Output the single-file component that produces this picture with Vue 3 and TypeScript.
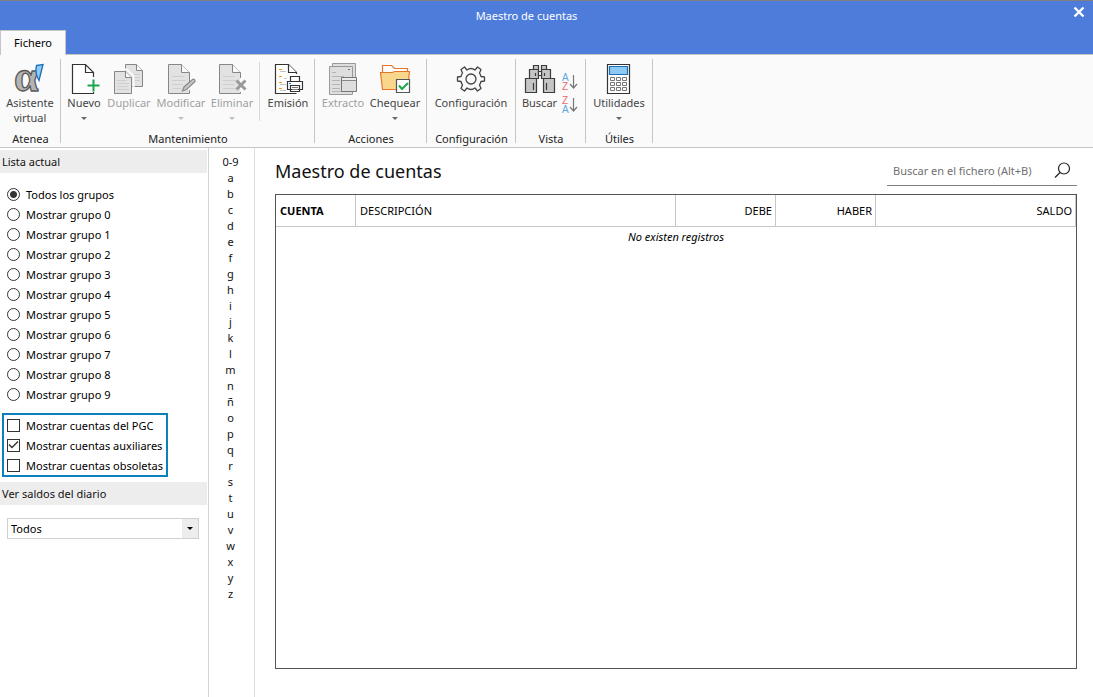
<script setup lang="ts">
import { ref } from 'vue'

const groups = ['Todos los grupos', ...Array.from({ length: 10 }, (_, i) => `Mostrar grupo ${i}`)]
const selectedGroup = ref(groups[0])

const filters = ref([
  { id: 'pgc', label: 'Mostrar cuentas del PGC', on: false },
  { id: 'aux', label: 'Mostrar cuentas auxiliares', on: true },
  { id: 'obs', label: 'Mostrar cuentas obsoletas', on: false },
])

const letters = ['0-9', ...'abcdefghijklmnñopqrstuvwxyz']
const journal = ref('Todos')
const query = ref('')
</script>

<template>
  <div class="window">
    <header class="titlebar">
      <div class="title">Maestro de cuentas</div>
      <button class="close" aria-label="Cerrar">
        <svg width="12" height="12" viewBox="0 0 12 12"><path d="M1.5 1.5l9 9M10.5 1.5l-9 9" stroke="#fff" stroke-width="2.4" /></svg>
      </button>
      <nav class="tabs"><button class="tab">Fichero</button></nav>
    </header>

    <div class="ribbon">
      <section class="group g-atenea">
        <div class="tools">
          <button class="tool">
            <svg class="icon" viewBox="0 0 34 34">
              <text x="1" y="29" class="alpha">α</text>
              <path d="M23.500 3.500L30 2.500L26 18.500Q21.500 11 23.500 3.500z" fill="#8fcaf5" stroke="#1c6fb5" stroke-width="1.300" />
            </svg>
            <span>Asistente<br />virtual</span>
          </button>
        </div>
        <h2>Atenea</h2>
      </section>

      <section class="group g-mant">
        <div class="tools">
          <button class="tool">
            <svg class="icon" viewBox="0 0 34 34" fill="none">
              <path d="M26.500 15V10.500L18.500 2.500H5.500V31.500H26.500V30M18.500 2.500V10.500H26.500" fill="#fff" stroke="#333" stroke-width="1.200" />
              <path d="M24 17h5v12h-5z" fill="#fafafa" />
              <path d="M26.500 17.500v12M20.500 23.500h12" stroke="#17a84b" stroke-width="2" />
            </svg>
            <span>Nuevo</span><i class="caret"></i>
          </button>
          <button class="tool" disabled>
            <svg class="icon" viewBox="0 0 34 34" stroke="#868686" fill="#e2e2e2">
              <path d="M13.500 24.500V2.500H24.500L30.500 8.500V24.500z" />
              <path d="M24.500 2.500V8.500H30.500" fill="#fafafa" />
              <path d="M21 12.500h7M21 15.500h7M21 18.500h7" stroke="#cfcfcf" />
              <path d="M0.500 7.500H15L21.500 14V33.500" fill="none" stroke="#fafafa" stroke-width="2" />
              <path d="M2.500 31.500V9.500H13.500L19.500 15.500V31.500z" />
              <path d="M13.500 9.500V15.500H19.500" fill="#fafafa" />
              <path d="M5 18.500h10M5 21.500h12M5 24.500h11M5 27.500h12" stroke="#cfcfcf" />
            </svg>
            <span>Duplicar</span>
          </button>
          <button class="tool" disabled>
            <svg class="icon" viewBox="0 0 34 34" stroke="#868686" fill="#e2e2e2">
              <path d="M4.500 31.500V2.500H17.500L25.500 10.500V31.500z" />
              <path d="M17.500 2.500V10.500H25.500" fill="#fafafa" />
              <path d="M8 14.500h12M8 18.500h14M8 22.500h11M8 26.500h9" stroke="#cfcfcf" />
              <path d="M23 27L30 20" stroke="#fafafa" stroke-width="5" />
              <path d="M18.500 29L20 25L28.500 17.500Q31 16.500 31 19.500L22.500 27.500z" fill="#c8c8c8" stroke="#8c8c8c" stroke-width="1.300" />
            </svg>
            <span>Modificar</span><i class="caret"></i>
          </button>
          <button class="tool" disabled>
            <svg class="icon" viewBox="0 0 34 34" stroke="#868686" fill="#e2e2e2">
              <path d="M4.500 31.500V2.500H17.500L25.500 10.500V31.500z" />
              <path d="M17.500 2.500V10.500H25.500" fill="#fafafa" />
              <path d="M8 14.500h12M8 18.500h13M8 22.500h11M8 26.500h12" stroke="#cfcfcf" />
              <path d="M25 16h4v14h-4z" fill="#fafafa" stroke="none" />
              <path d="M21.500 18.500l9 9M30.500 18.500l-9 9" stroke="#9a9a9a" stroke-width="3" />
            </svg>
            <span>Eliminar</span><i class="caret"></i>
          </button>
          <div class="rule"></div>
          <button class="tool">
            <svg class="icon" viewBox="0 0 34 34" stroke="#333" fill="#fff" stroke-width="1.200">
              <path d="M25.500 12V10.500L17.500 2.500H4.500V31.500H25.500" />
              <path d="M17.500 2.500V10.500H25.500" />
              <path d="M8 7.500h3M8 14.500h3M8 20.500h3M8 26.500h3" stroke="#f0961e" />
              <path d="M9 9.500h6M13 16.500h3M9 22.500h6M9 28.500h6" stroke="#c4c4c4" />
              <path d="M16 17h17v14H16z" stroke="none" />
              <path d="M19.500 19V14.500H28.500V19M16.500 19.500H31.500V27.500H16.500zM19.500 23.500H28.500V29.500H19.500z" />
              <path d="M21 25.500h6M21 27.500h6" stroke="#777" />
              <path d="M18 21.500h2" stroke="#2f8fd6" />
            </svg>
            <span>Emisión</span>
          </button>
        </div>
        <h2>Mantenimiento</h2>
      </section>

      <section class="group g-acc">
        <div class="tools">
          <button class="tool" disabled>
            <svg class="icon" viewBox="0 0 34 34" stroke="#999" fill="#dedede">
              <path d="M6.500 1.500H29.500V28.500H6.500z" />
              <path d="M3.500 4.500H26.500V32.500H3.500z" />
              <path d="M6 10.500h4M6 14.500h12M6 18.500h8M6 22.500h8M6 26.500h8M6 29.500h12" stroke="#b4b4b4" />
              <path d="M22 7.500h2" stroke="#777" />
              <path d="M15.500 15.500H30.500V29.500H15.500z" stroke="#777" />
              <path d="M15.500 18.500h15" stroke="#888" />
              <path d="M16 17h14" stroke="#fafafa" />
            </svg>
            <span>Extracto</span>
          </button>
          <button class="tool">
            <svg class="icon" viewBox="0 0 34 34" stroke="#e5752b" stroke-width="1.200">
              <path d="M4.500 10V3.500H13.500L16.500 6.500H29.500V10" fill="#fff" />
              <path d="M2.500 10.500H14L17 9.500H31.500L29.500 27.500H4.500z" fill="#f8d78d" />
              <path d="M18.500 17.500H31.500V30.500H18.500z" fill="#fff" stroke="#555" />
              <path d="M21 23.500l3 3.500l6-6" fill="none" stroke="#17a84b" stroke-width="2" />
            </svg>
            <span>Chequear</span><i class="caret"></i>
          </button>
        </div>
        <h2>Acciones</h2>
      </section>

      <section class="group g-conf">
        <div class="tools">
          <button class="tool">
            <svg class="icon" viewBox="0 0 34 34" fill="none" stroke="#444" stroke-width="1.300" stroke-linejoin="round">
              <circle cx="17" cy="17" r="5" />
              <path d="M27 14.500L30.500 15V19L27 19.500Q26.500 21.500 25.500 23L27 26.500L23.500 29L21 26Q19 27.500 17 27.500T13 26L10.500 29L7 26.500L8.500 23Q7.500 21.500 7 19.500L3.500 19V15L7 14.500Q7.500 12.500 8.500 11L7 7.500L10.500 5L13 8Q15 6.500 17 6.500T21 8L23.500 5L27 7.500L25.500 11Q26.500 12.500 27 14.500z" />
            </svg>
            <span>Configuración</span>
          </button>
        </div>
        <h2>Configuración</h2>
      </section>

      <section class="group g-vista">
        <div class="tools">
          <button class="tool">
            <svg class="icon" viewBox="0 0 34 34" fill="#c6c4c4" stroke="#3c3c3c" stroke-width="1.200">
              <path d="M10.500 3.500H15.500V7.500H10.500zM18.500 3.500H23.500V7.500H18.500z" />
              <path d="M6.500 7.500H15.500V16.500H6.500zM18.500 7.500H27.500V16.500H18.500z" />
              <path d="M15.500 9.500H18.500V13.500H15.500z" fill="#fafafa" />
              <path d="M2.500 16.500H13.500V30.500H2.500zM20.500 16.500H31.500V30.500H20.500z" />
              <path d="M10.500 21v7M23.500 21v7M12.500 11v3M21.500 11v3" />
            </svg>
            <span>Buscar</span>
          </button>
          <div class="sorts">
            <button aria-label="Ordenar de la A a la Z">
              <svg width="17" height="18" viewBox="0 0 17 18" fill="none">
                <text x="0" y="8" class="az" fill="#5aa9e0">A</text><text x="0" y="17" class="az" fill="#ee6a70">Z</text>
                <path d="M11.500 2V14.500M8 11l3.500 4l3.500-4" stroke="#777" stroke-width="1.200" />
              </svg>
            </button>
            <button aria-label="Ordenar de la Z a la A">
              <svg width="17" height="18" viewBox="0 0 17 18" fill="none">
                <text x="0" y="8" class="az" fill="#ee6a70">Z</text><text x="0" y="17" class="az" fill="#5aa9e0">A</text>
                <path d="M11.500 2V14.500M8 11l3.500 4l3.500-4" stroke="#777" stroke-width="1.200" />
              </svg>
            </button>
          </div>
        </div>
        <h2>Vista</h2>
      </section>

      <section class="group g-util">
        <div class="tools">
          <button class="tool">
            <svg class="icon" viewBox="0 0 34 34" fill="#fff" stroke="#333" stroke-width="1.200">
              <path d="M5.500 2.500H27.500V31.500H5.500z" />
              <path d="M7.500 4.500H25.500V12.500H7.500z" fill="#8fcaf5" stroke="#1c6fb5" />
              <path d="M8.500 15.500h4v3h-4zM14.500 15.500h4v3h-4zM20.500 15.500h4v3h-4zM8.500 20.500h4v3h-4zM14.500 20.500h4v3h-4zM20.500 20.500h4v3h-4zM8.500 25.500h4v3h-4zM14.500 25.500h4v3h-4zM20.500 25.500h4v3h-4z" stroke="#777" stroke-width="1" />
            </svg>
            <span>Utilidades</span><i class="caret"></i>
          </button>
        </div>
        <h2>Útiles</h2>
      </section>
    </div>

    <div class="body">
      <aside class="side">
        <h3>Lista actual</h3>
        <div class="options">
          <label v-for="g in groups" :key="g">
            <input v-model="selectedGroup" type="radio" name="grupo" :value="g" />{{ g }}
          </label>
        </div>
        <div class="checks">
          <label v-for="f in filters" :key="f.id">
            <input v-model="f.on" type="checkbox" />
            <svg v-if="f.on" class="tick" width="13" height="13" viewBox="0 0 13 13"><path d="M2 6.500l3 3l6-6" fill="none" stroke="#333" stroke-width="1.400" /></svg>
            {{ f.label }}
          </label>
        </div>
        <h3 id="diario">Ver saldos del diario</h3>
        <div class="combo">
          <select v-model="journal" aria-labelledby="diario"><option>Todos</option></select>
          <i class="caret dark"></i>
        </div>
      </aside>

      <nav class="index" aria-label="Índice alfabético">
        <button v-for="l in letters" :key="l">{{ l }}</button>
      </nav>

      <main class="main">
        <div class="heading">
          <h1>Maestro de cuentas</h1>
          <div class="search">
            <input v-model="query" type="text" placeholder="Buscar en el fichero (Alt+B)" aria-label="Buscar en el fichero" />
            <button aria-label="Buscar">
              <svg width="17" height="17" viewBox="0 0 17 17" fill="none" stroke="#222" stroke-width="1.200"><circle cx="10" cy="6.500" r="5.500" /><path d="M6 10.500L1 15.500" /></svg>
            </button>
          </div>
        </div>
        <div class="grid">
          <table>
            <colgroup><col class="c-cuenta" /><col class="c-desc" /><col class="c-num" /><col class="c-num" /><col /></colgroup>
            <thead>
              <tr><th class="sorted">CUENTA</th><th>DESCRIPCIÓN</th><th class="num">DEBE</th><th class="num">HABER</th><th class="num">SALDO</th></tr>
            </thead>
            <tbody><tr><td colspan="5">No existen registros</td></tr></tbody>
          </table>
        </div>
      </main>
    </div>
  </div>
</template>

<style>
body { margin: 0; background: #fff; }
</style>

<style scoped>
* { box-sizing: border-box; }
.window { min-height: 100vh; display: flex; flex-direction: column; font: 11px/15px "Noto Sans", "Open Sans", sans-serif; color: #111; }
button, input, select { font: inherit; color: inherit; margin: 0; padding: 0; border: 0; background: none; }
h1, h2, h3 { margin: 0; font-weight: 400; }
svg { display: block; }

.titlebar { position: relative; height: 55px; flex: none; display: flex; flex-direction: column; justify-content: space-between; background: #4d7cdb; border-top: 1px solid #808080; border-bottom: 1px solid #c6c6c6; }
.title { padding-top: 7px; text-align: center; color: #fff; text-indent: -40px; }
.close { position: absolute; top: 5px; right: 8px; }
.tabs { display: flex; margin-bottom: -1px; }
.tab { height: 25px; width: 66px; padding-bottom: 2px; background: #fafafa; border: 1px solid #c6c6c6; border-bottom: 0; color: #000; }

.ribbon { height: 93px; flex: none; display: flex; padding: 4px 0; background: #fafafa; border-bottom: 1px solid #c6c6c6; }
.group { display: flex; flex-direction: column; justify-content: space-between; border-right: 1px solid #c6c6c6; }
.group h2 { text-align: center; font-size: 11px; line-height: 15px; margin-bottom: -3px; padding-left: 1px; color: #222; }
.tools { display: flex; padding-top: 3px; justify-content: center; }
.tool { flex: 1 0 0; display: flex; flex-direction: column; align-items: center; line-height: 15px; color: #444; white-space: nowrap; }
.tool:disabled { color: #a0a0a0; }
.icon { width: 34px; height: 34px; margin-bottom: -1px; overflow: visible; }
.alpha { font: 700 44px "Liberation Serif", serif; fill: #b4b4b4; stroke: #5a5a5a; stroke-width: 1.3; }
.az { font: 10px "Liberation Sans", sans-serif; }
.caret { width: 0; height: 0; margin-top: 7px; border: 3px solid transparent; border-top-color: #666; border-bottom: 0; }
.tool:disabled .caret { border-top-color: #c0c0c0; }
.g-atenea { width: 61px; }
.g-mant { width: 254px; }
.g-mant .tools { display: grid; grid-template-columns: 44px 46px 58px 44px 12px 44px; justify-content: start; padding-left: 1px; }
.rule { width: 1px; height: 59px; margin-left: 5px; background: #d8d8d8; }
.g-acc { width: 112px; }
.g-acc .tools { padding-left: 2px; padding-right: 5px; }
.g-conf { width: 89px; }
.g-vista { width: 70px; }
.g-vista .tools { padding-left: 1px; padding-right: 6px; }
.g-util { width: 67px; }
.sorts { display: flex; flex-direction: column; gap: 5px; padding-top: 11px; }

.body { flex: 1; display: flex; }
.side { width: 209px; padding-top: 2px; border-right: 1px solid #d4d4d4; }
.side h3 { margin-right: 1px; padding: 0 2px; font-size: 11px; line-height: 23px; background: #ededed; }
.options { padding: 11px 7px 0; }
label { position: relative; display: flex; align-items: center; gap: 6px; height: 20px; white-space: nowrap; color: #000; }
input[type="radio"], input[type="checkbox"] { appearance: none; width: 13px; height: 13px; border: 1px solid #333; background: #fff; }
input[type="radio"] { border-radius: 50%; }
input[type="radio"]:checked { background: radial-gradient(circle, #333 0 3px, #fff 4px); }
.tick { position: absolute; left: 0; top: 3px; }
.checks { width: 166px; margin: 9px 0 5px 2px; padding: 0 3px; border: 2px solid #0c80bd; }
.combo { display: grid; grid-template-columns: 1fr 16px; align-items: center; height: 21px; margin: 13px 9px 0 7px; border: 1px solid #d0d0d0; }
.combo select { grid-area: 1 / 1 / 2 / 3; height: 19px; padding-left: 3px; appearance: none; background: linear-gradient(#ededed, #ededed) right / 16px 100% no-repeat; color: #000; }
.combo .caret { grid-area: 1 / 2; margin: 0; justify-self: center; border-top-color: #000; pointer-events: none; }

.index { width: 46px; padding: 6px 2px 0 0; display: flex; flex-direction: column; border-right: 1px solid #dcdcdc; }
.index button { height: 16px; flex: none; line-height: 16px; }

.main { flex: 1; display: flex; flex-direction: column; padding: 8px 16px 28px 20px; }
.heading { display: flex; justify-content: space-between; height: 38px; }
h1 { font-size: 18px; line-height: 31px; color: #111; }
.search { width: 190px; height: 30px; display: flex; align-items: center; border-bottom: 1px solid #808080; padding-right: 6px; }
.search input { flex: 1; min-width: 0; padding-left: 6px; outline: 0; }
.search input::placeholder { color: #707070; opacity: 1; }
.grid { flex: 1; border: 1px solid #555; }
table { width: 100%; table-layout: fixed; border-collapse: separate; border-spacing: 0; }
.c-cuenta { width: 80px; }
.c-desc { width: 320px; }
.c-num { width: 100px; }
th { height: 32px; padding: 0 4px; text-align: left; font-weight: 400; color: #000; border-right: 1px solid #c6c6c6; border-bottom: 1px solid #c6c6c6; }
th.num { padding-right: 3px; }
th.sorted { font-weight: 700; }
th.num { text-align: right; }
td { padding: 2px; text-align: center; font-style: italic; color: #000; }
</style>
